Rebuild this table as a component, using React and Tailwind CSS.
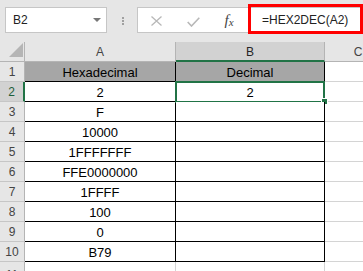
import { useState } from 'react';

const values = ['Hexadecimal', '2', 'F', '10000', '1FFFFFFF', 'FFE0000000', '1FFFF', '100', '0', 'B79'];

function FormulaBar() {
  return (
    <div className="relative h-[42px] bg-[#e6e6e6] flex items-start pt-[7px] pl-[5px]">
      <div className="w-[102px] h-[26px] shrink-0 bg-white border border-[#c6c6c6] flex items-center justify-between pl-[7px] pr-[5px]">
        <span className="text-[12px] text-[#222]">B2</span>
        <div className="w-0 h-0 border-l-[4px] border-r-[4px] border-t-[4px] border-l-transparent border-r-transparent border-t-[#777]" />
      </div>
      <div className="w-[30px] shrink-0 flex flex-col items-center gap-[1px] pt-[10px] pl-[2px]">
        <div className="w-[2px] h-[2px] bg-[#a0a0a0]" />
        <div className="w-[2px] h-[2px] bg-[#a0a0a0]" />
        <div className="w-[2px] h-[2px] bg-[#a0a0a0]" />
      </div>
      <div className="flex-1 h-[26px] bg-white border border-[#c6c6c6] border-r-0 flex items-center">
        <div className="w-[37px] flex justify-center">
          <svg width="11" height="10" viewBox="0 0 11 10" className="mt-[2px]">
            <path d="M0.5 0.5 L10.5 9.5 M10.5 0.5 L0.5 9.5" stroke="#b8b8b8" strokeWidth="1.3" fill="none" />
          </svg>
        </div>
        <div className="w-[37px] flex justify-center">
          <svg width="13" height="10" viewBox="0 0 13 10" className="mt-[4px]">
            <path d="M0.7 5 L4.5 9 L12.3 0.7" stroke="#b8b8b8" strokeWidth="1.6" fill="none" />
          </svg>
        </div>
        <div className="w-[34px] flex justify-center items-end font-['Liberation_Serif',serif] italic text-[#444]">
          <span className="text-[15px] leading-none">f</span>
          <span className="text-[11px] leading-none">x</span>
        </div>
        <span className="pl-[16px] text-[12px] text-[#222]">=HEX2DEC(A2)</span>
      </div>
      <div className="absolute left-[248px] top-[4px] w-[115px] h-[30px] border-[3px] border-[#ff0000]" />
    </div>
  );
}

function ColumnHeaders() {
  return (
    <div className="flex h-[20px] text-[12px] text-[#444]">
      <div className="w-[25px] shrink-0 bg-[#e6e6e6] border-r border-b border-[#b4b4b4] flex items-end justify-end pr-[1px] pb-[4px]">
        <svg width="14" height="14" viewBox="0 0 14 14">
          <polygon points="0,14 14,14 14,0" fill="#b5b5b5" />
        </svg>
      </div>
      <div className="w-[151px] shrink-0 bg-[#e6e6e6] border-r border-b border-[#b4b4b4] flex items-center justify-center">A</div>
      <div className="w-[149px] shrink-0 bg-[#d2d2d2] border-r border-r-[#b4b4b4] border-b-2 border-b-[#217346] flex items-center justify-center pt-[1px] text-[#262626]">B</div>
      <div className="w-[66px] shrink-0 bg-[#e6e6e6] border-b border-[#b4b4b4] flex items-center justify-center">C</div>
    </div>
  );
}

function Row({ n, value }) {
  const header = n === 1;
  const active = n === 2;
  return (
    <div className="flex h-[20px] text-[13px]">
      <div
        className={`w-[25px] shrink-0 border-b border-[#c6c6c6] flex items-center justify-center text-[12px] ${
          active ? 'bg-[#d2d2d2] border-r-2 border-r-[#217346] text-[#1d5e3a]' : 'bg-[#e6e6e6] border-r border-r-[#b4b4b4] text-[#444]'
        }`}
      >
        {n}
      </div>
      <div
        className={`w-[151px] shrink-0 border-r border-b border-black flex items-center justify-center pt-[2px] ${
          header ? 'bg-[#a6a6a6]' : 'bg-white'
        }`}
      >
        {value}
      </div>
      <div
        className={`relative w-[149px] shrink-0 border-r border-b border-black flex items-center justify-center pt-[2px] ${
          header ? 'bg-[#a6a6a6]' : 'bg-white'
        }`}
      >
        {header ? 'Decimal' : active ? '2' : ''}
        {active && (
          <>
            <div className="absolute -left-[1px] -top-[1px] w-[150px] h-[22px] border-2 border-[#217346]" />
            <div className="absolute left-[145px] top-[16px] w-[7px] h-[7px] bg-[#217346] border border-white" />
          </>
        )}
      </div>
      <div className="w-[66px] shrink-0 border-b border-[#d4d4d4]" />
    </div>
  );
}

export default function App() {
  const [sel] = useState('B2');
  return (
    <div className="w-[363px] h-[271px] overflow-hidden bg-white text-black font-['Liberation_Sans',Arial,sans-serif]" data-sel={sel}>
      <FormulaBar />
      <ColumnHeaders />
      {values.map((v, i) => (
        <Row key={i} n={i + 1} value={v} />
      ))}
      <div className="flex h-[20px]">
        <div className="w-[25px] shrink-0 bg-[#e6e6e6] border-r border-[#b4b4b4] flex justify-center pt-[4px] text-[12px] text-[#444]">11</div>
        <div className="w-[151px] shrink-0 border-r border-[#d4d4d4]" />
        <div className="w-[149px] shrink-0 border-r border-[#d4d4d4]" />
      </div>
    </div>
  );
}
